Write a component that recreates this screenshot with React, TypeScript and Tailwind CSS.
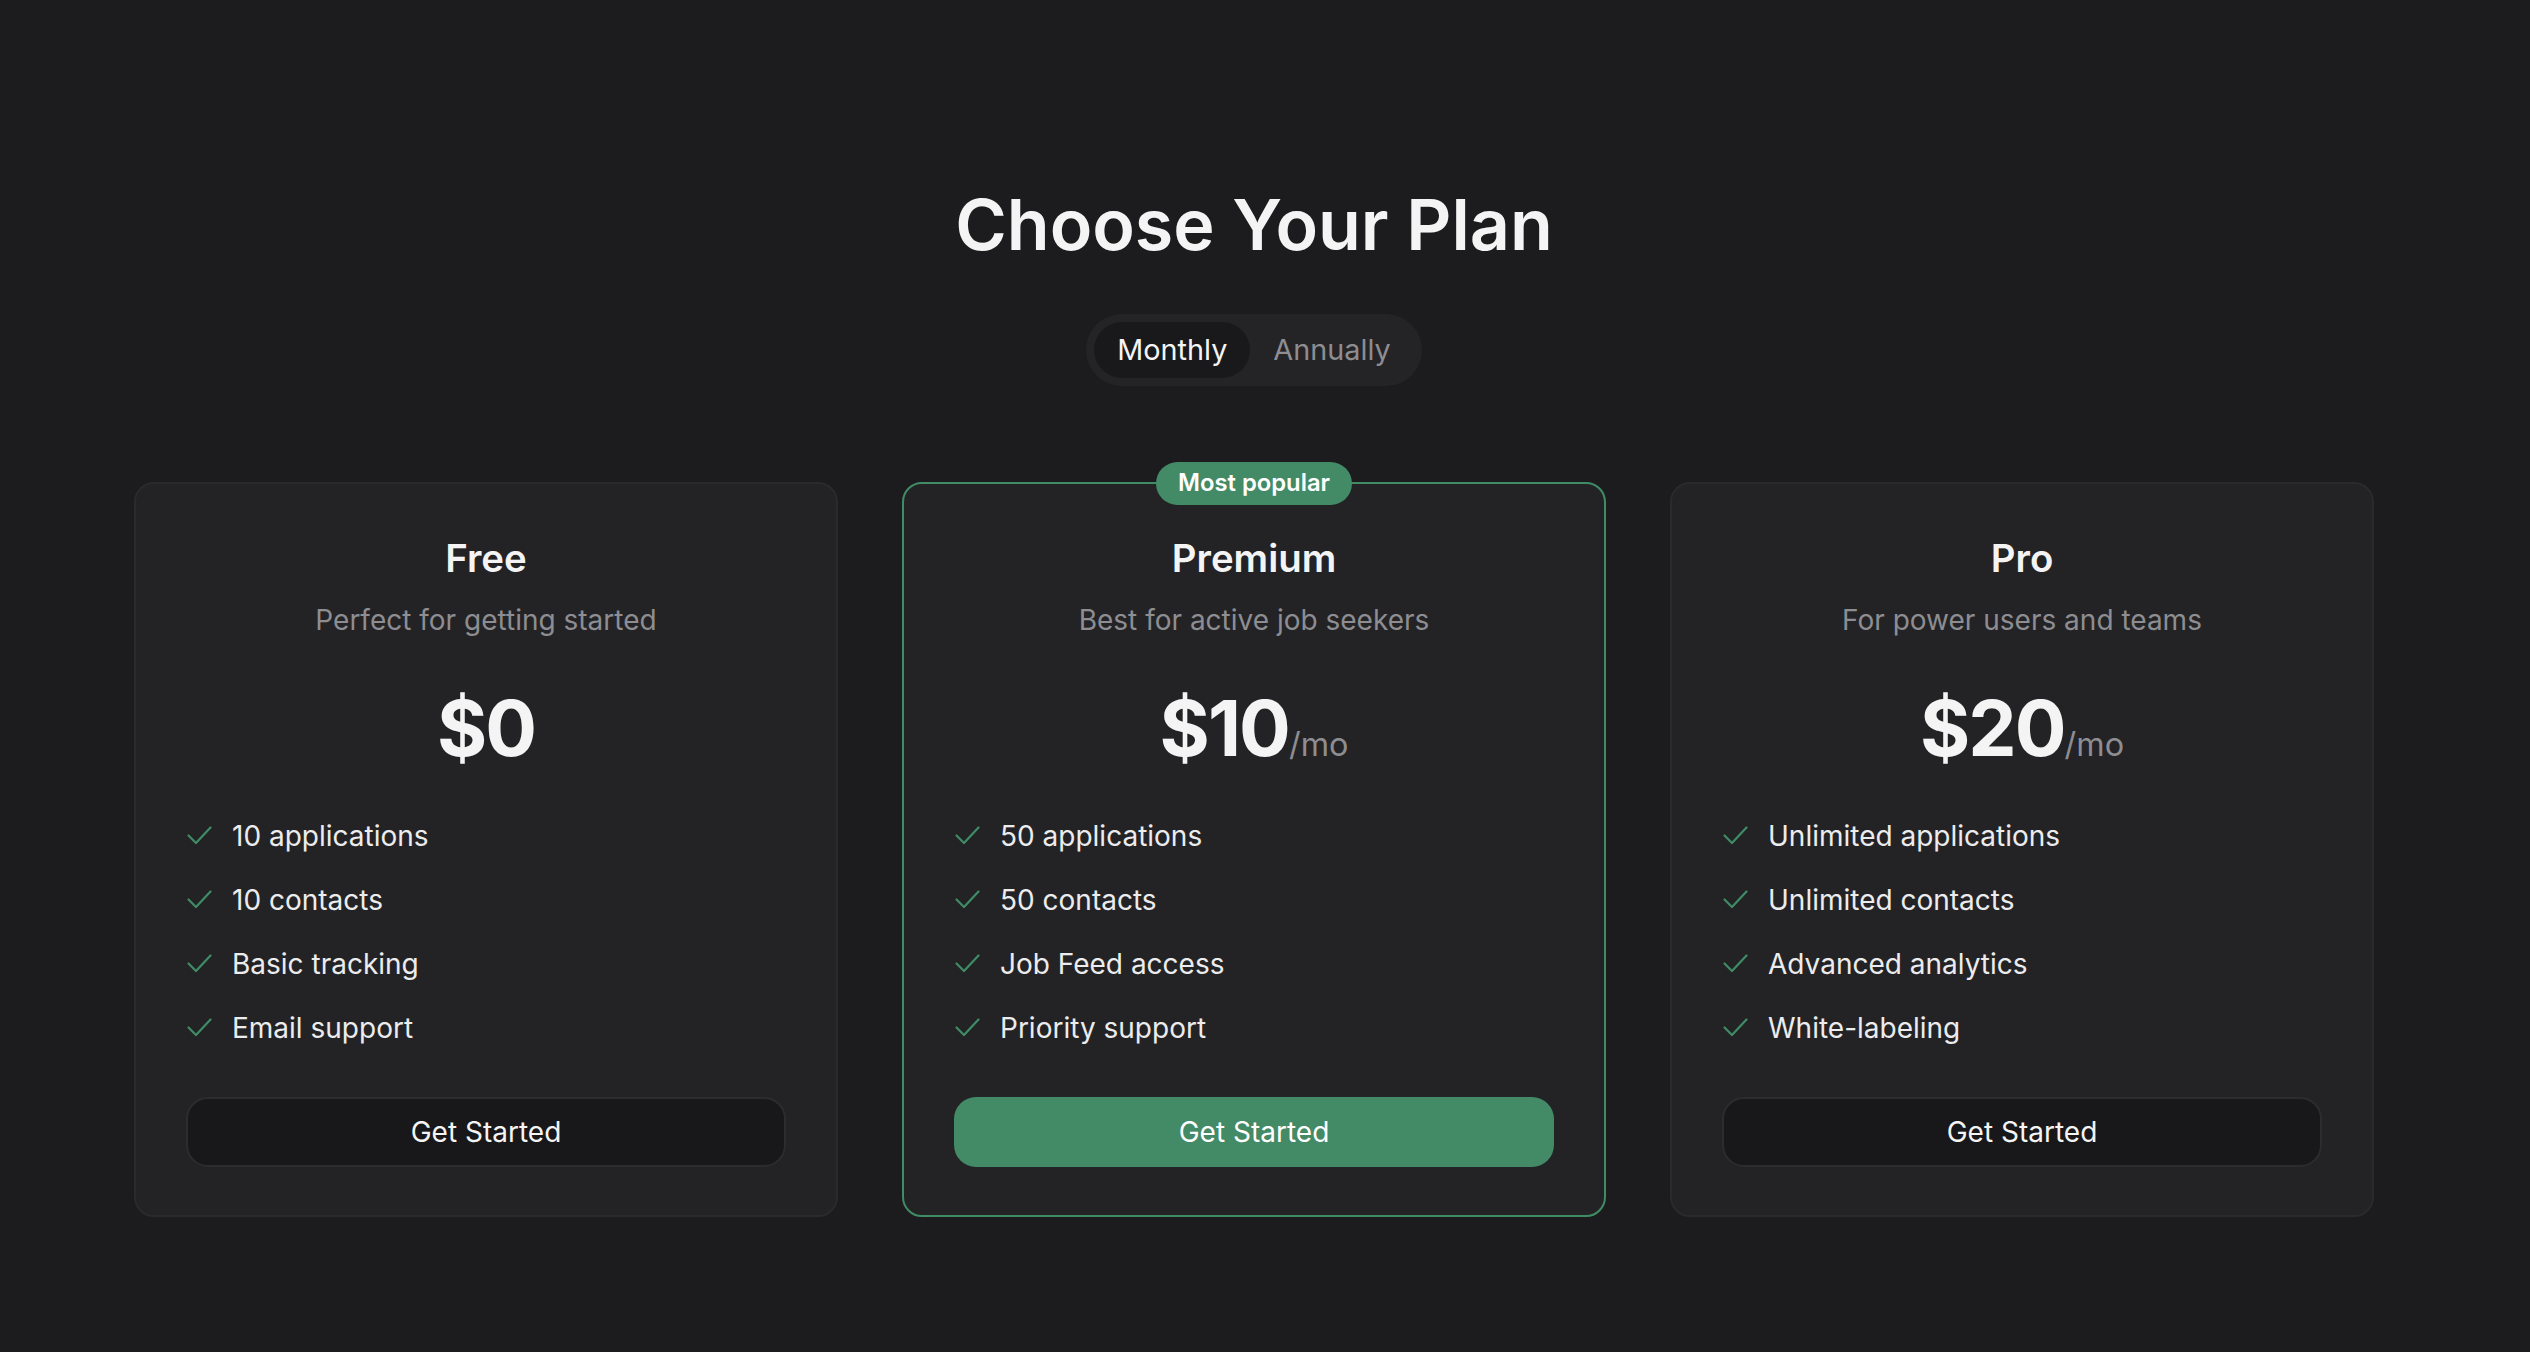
import React, { useState } from 'react';

interface Plan {
  name: string;
  tagline: string;
  price: string;
  perMonth: boolean;
  features: string[];
  popular?: boolean;
}

const plans: Plan[] = [
  {
    name: 'Free',
    tagline: 'Perfect for getting started',
    price: '$0',
    perMonth: false,
    features: ['10 applications', '10 contacts', 'Basic tracking', 'Email support'],
  },
  {
    name: 'Premium',
    tagline: 'Best for active job seekers',
    price: '$10',
    perMonth: true,
    features: ['50 applications', '50 contacts', 'Job Feed access', 'Priority support'],
    popular: true,
  },
  {
    name: 'Pro',
    tagline: 'For power users and teams',
    price: '$20',
    perMonth: true,
    features: ['Unlimited applications', 'Unlimited contacts', 'Advanced analytics', 'White-labeling'],
  },
];

function CheckMark() {
  return (
    <svg width="25" height="19" viewBox="0 0 25 19" fill="none" className="shrink-0">
      <polyline
        points="1.5,9.5 9,17 23.5,1.5"
        stroke="#3f8c65"
        strokeWidth="2.2"
        strokeLinecap="round"
        strokeLinejoin="round"
      />
    </svg>
  );
}

export default function App() {
  const [billing, setBilling] = useState<'monthly' | 'annually'>('monthly');

  return (
    <div className="min-h-screen bg-[#1c1c1e] pr-[22px] font-['Inter','Noto_Sans',sans-serif] text-[#f4f4f5]">
      <div className="mx-auto flex w-[2240px] flex-col items-center pt-[190px]">
        {/* Heading */}
        <h1 className="text-[70px] font-semibold leading-none text-[#f4f4f5]">
          Choose Your Plan
        </h1>

        {/* Billing toggle */}
        <div className="mt-[54px] flex items-center rounded-full bg-[#242426] p-[8px]">
          <button
            onClick={() => setBilling('monthly')}
            className={`rounded-full px-[23px] py-[5.6px] text-[28.8px] font-normal leading-[44.8px] ${
              billing === 'monthly' ? 'bg-[#19191b] text-[#f4f4f5]' : 'text-[#8d8d92]'
            }`}
          >
            Monthly
          </button>
          <button
            onClick={() => setBilling('annually')}
            className={`rounded-full px-[23px] py-[5.6px] text-[28.8px] font-normal leading-[44.8px] ${
              billing === 'annually' ? 'bg-[#19191b] text-[#f4f4f5]' : 'text-[#8d8d92]'
            }`}
          >
            Annually
          </button>
        </div>

        {/* Plan cards */}
        <div className="mt-[96px] grid w-full grid-cols-3 gap-[64px]">
          {plans.map((plan) => (
            <div
              key={plan.name}
              className={`relative flex flex-col rounded-[20px] border-2 bg-[#232325] px-[50px] pb-[48px] pt-[49px] ${
                plan.popular ? 'border-[#3f8c65]' : 'border-[#2a2a2d]'
              }`}
            >
              {plan.popular && (
                <div className="absolute left-1/2 top-[-22px] -translate-x-1/2 rounded-full bg-[#438a66] px-[22px] py-[5.5px] text-[23.8px] font-semibold leading-[32px] text-white">
                  Most popular
                </div>
              )}

              <div className="text-center text-[38.4px] font-semibold leading-[51.2px] text-[#f4f4f5]">
                {plan.name}
              </div>
              <div className="mt-[15px] text-center text-[28px] leading-[42px] text-[#8d8d92]">
                {plan.tagline}
              </div>

              <div className="mt-[50px] flex items-baseline justify-center">
                <span className="text-[76.8px] font-bold leading-none tracking-tight text-[#f4f4f5]">
                  {plan.price}
                </span>
                {plan.perMonth && (
                  <span className="text-[32.4px] leading-none text-[#8d8d92]">/mo</span>
                )}
              </div>

              <ul className="mt-[47px] flex flex-col gap-[22px] pl-[1px]">
                {plan.features.map((feature) => (
                  <li key={feature} className="flex items-center gap-[20px] text-[28px] leading-[42px] text-[#ececee]">
                    <CheckMark />
                    <span>{feature}</span>
                  </li>
                ))}
              </ul>

              <button
                className={`mt-[48px] h-[70px] w-full rounded-[22px] text-[28px] font-normal ${
                  plan.popular
                    ? 'bg-[#438a66] text-white'
                    : 'border-2 border-[#2c2c2f] bg-[#18181a] text-[#f4f4f5]'
                }`}
              >
                Get Started
              </button>
            </div>
          ))}
        </div>
      </div>
    </div>
  );
}
